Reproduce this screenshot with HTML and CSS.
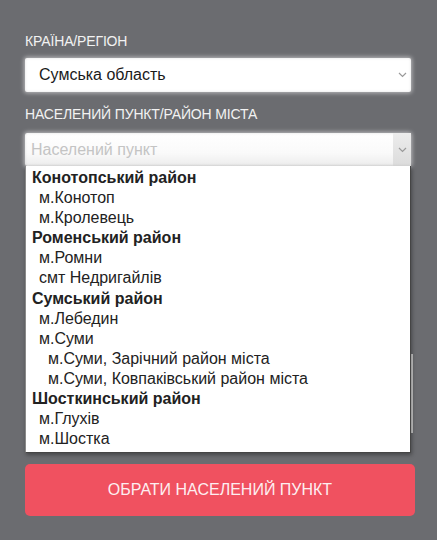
FILE: index.html
```html
<!DOCTYPE html>
<html lang="uk">
<head>
<meta charset="utf-8">
<title>Обрати населений пункт</title>
<link rel="stylesheet" href="styles.css">
</head>
<body>
<div class="panel">
  <div class="label">КРАЇНА/РЕГІОН</div>
  <div class="select">
    <span class="value">Сумська область</span>
    <span class="arrow"><svg width="9" height="6" viewBox="0 0 9 6"><path d="M1 1 L4.5 4.5 L8 1" fill="none" stroke="#9a9a9a" stroke-width="1.2"/></svg></span>
  </div>
  <div class="label label-2">НАСЕЛЕНИЙ ПУНКТ/РАЙОН МІСТА</div>
  <div class="select-wrap">
    <div class="select open">
      <span class="value placeholder">Населений пункт</span>
      <span class="arrow hover"><svg width="9" height="6" viewBox="0 0 9 6"><path d="M1 1 L4.5 4.5 L8 1" fill="none" stroke="#9a9a9a" stroke-width="1.2"/></svg></span>
    </div>
    <ul class="listbox">
      <li class="group">Конотопський район</li>
      <li class="opt">м.Конотоп</li>
      <li class="opt">м.Кролевець</li>
      <li class="group">Роменський район</li>
      <li class="opt">м.Ромни</li>
      <li class="opt">смт Недригайлів</li>
      <li class="group">Сумський район</li>
      <li class="opt">м.Лебедин</li>
      <li class="opt">м.Суми</li>
      <li class="opt sub">м.Суми, Зарічний район міста</li>
      <li class="opt sub">м.Суми, Ковпаківський район міста</li>
      <li class="group">Шосткинський район</li>
      <li class="opt">м.Глухів</li>
      <li class="opt">м.Шостка</li>
    </ul>
  </div>
  <div class="behind"><div class="behind-bar"></div></div>
  <button class="submit" type="button">ОБРАТИ НАСЕЛЕНИЙ ПУНКТ</button>
</div>
</body>
</html>
```
FILE: styles.css
```css
html, body {
  margin: 0;
  padding: 0;
  background: #6b6c70;
  height: 100%;
}
body {
  font-family: "Liberation Sans", Arial, sans-serif;
}
.panel {
  padding: 34px 22px 0 25px;
  display: flex;
  flex-direction: column;
  align-items: flex-start;
}
.label {
  color: #f2f2f2;
  font-size: 14px;
  line-height: 15px;
  letter-spacing: -0.15px;
  margin-bottom: 9px;
}
.label-2 {
  margin-top: 15px;
  margin-bottom: 11px;
}
.select {
  width: 386px;
  height: 34px;
  box-sizing: border-box;
  background: #fff;
  border-radius: 2px;
  box-shadow: 0 0 4px 1px rgba(255,255,255,0.55), inset 0 0 3px rgba(0,0,0,0.12);
  display: flex;
  align-items: center;
  justify-content: space-between;
}
.value {
  font-size: 16px;
  color: #1a1a1a;
  padding-left: 14px;
}
.placeholder {
  color: #c4c4c4;
  padding-left: 6px;
}
.arrow {
  width: 18px;
  height: 100%;
  display: flex;
  align-items: center;
  justify-content: center;
}
.arrow.hover {
  background: linear-gradient(#ececec, #dcdcdc);
}
.select.open {
  height: 33px;
  background: linear-gradient(#ffffff, #fafafa 60%, #ececec);
}
.select-wrap {
  position: relative;
}
.listbox {
  position: absolute;
  top: 100%;
  left: 0;
  width: 386px;
  box-sizing: border-box;
  margin: 0;
  padding: 2px 0 3px;
  list-style: none;
  background: #fff;
  border: 1px solid #8a8a8a;
  border-top: none;
  border-right-color: #454545;
  border-bottom-color: #454545;
  box-shadow: 1px 2px 4px rgba(0,0,0,0.35);
  z-index: 2;
}
.listbox li {
  height: 20.1px;
  line-height: 20px;
  font-size: 16px;
  color: #222;
  white-space: nowrap;
}
.group {
  font-weight: bold;
  color: #111;
  padding-left: 6px;
}
.opt {
  padding-left: 13px;
}
.opt.sub {
  padding-left: 22px;
}
.behind {
  width: 388px;
  height: 286px;
  box-sizing: border-box;
  display: flex;
  justify-content: flex-end;
  align-items: flex-end;
  padding-bottom: 19px;
}
.behind-bar {
  width: 2px;
  height: 79px;
  background: #c8c8c8;
}
.submit {
  margin-top: 12px;
  width: 390px;
  height: 52px;
  border: none;
  border-radius: 5px;
  background: #f05160;
  color: #fdeef0;
  font-family: "Liberation Sans", Arial, sans-serif;
  font-size: 16px;
  cursor: pointer;
}
```
